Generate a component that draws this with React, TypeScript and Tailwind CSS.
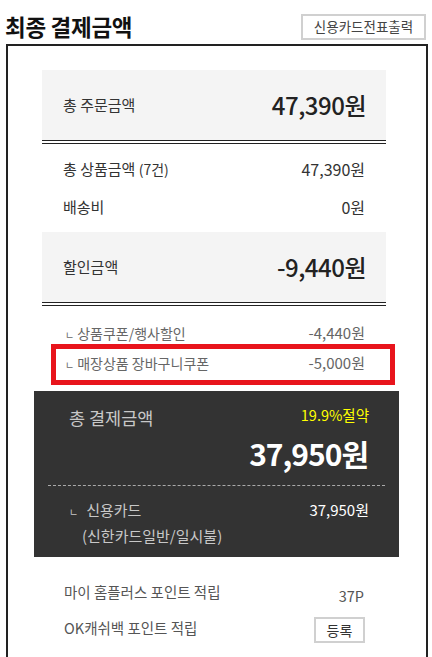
import React from "react";

const F = { fontFamily: '"Noto Sans CJK KR", "Noto Sans", sans-serif' };

function DoubleLine() {
  return <div className="h-[4px] border-y border-[#222]" />;
}

export default function App() {
  return (
    <div className="w-[432px] h-[657px] overflow-hidden bg-white text-[#333]" style={F}>
      <div className="flex items-center justify-between pl-[5px] pr-[6px] pt-[9px] h-[44px]">
        <h1 className="text-[22.5px] leading-none font-bold text-[#111] tracking-[-0.3px]">최종 결제금액</h1>
        <button className="w-[125px] h-[26px] border-2 border-[#d0d0d0] text-[13.5px] text-[#444] leading-none">
          신용카드전표출력
        </button>
      </div>
      <div className="ml-[6px] w-[422px] h-[700px] border-2 border-[#222] border-b-0 pt-[24px]">
        <div className="ml-[34px] w-[344px]">
          <div className="h-[70px] bg-[#f4f4f4] flex items-center justify-between pl-[21px] pr-[20px]">
            <span className="text-[15px]">총 주문금액</span>
            <span className="text-[24px] font-medium text-[#222] tracking-[-0.5px]">47,390원</span>
          </div>
          <DoubleLine />
          <div className="pt-[14px] pb-[14px] px-[21px] flex flex-col gap-[16px]">
            <div className="flex justify-between items-center h-[22px]">
              <span className="text-[15px]">총 상품금액 <span className="text-[14px]">(7건)</span></span>
              <span className="text-[16px]">47,390원</span>
            </div>
            <div className="flex justify-between items-center h-[22px]">
              <span className="text-[15px]">배송비</span>
              <span className="text-[16px]">0원</span>
            </div>
          </div>
          <div className="h-[70px] bg-[#f4f4f4] flex items-center justify-between pl-[21px] pr-[20px]">
            <span className="text-[15px]">할인금액</span>
            <span className="text-[24px] font-medium text-[#222] tracking-[-0.5px]">-9,440원</span>
          </div>
          <DoubleLine />
          <div className="pt-[16px] px-[21px] flex flex-col gap-[8px] text-[#666]">
            <div className="flex justify-between items-center h-[22px]">
              <span className="text-[14px]"><span className="text-[10px] ml-[2px] mr-[3px]">ㄴ</span>상품쿠폰/행사할인</span>
              <span className="text-[15px]">-4,440원</span>
            </div>
            <div className="relative flex justify-between items-center h-[22px]">
              <span className="text-[14px]"><span className="text-[10px] ml-[2px] mr-[3px]">ㄴ</span>매장상품 장바구니쿠폰</span>
              <span className="text-[15px]">-5,000원</span>
              <div className="absolute left-[-12px] right-[-30px] top-[-8px] h-[41px] border-[5px] border-[#e8141c]" />
            </div>
          </div>
        </div>
        <div className="ml-[26px] w-[365px] h-[166px] mt-[17px] bg-[#333] pt-[12px]">
          <div className="flex justify-between pl-[35px] pr-[30px]">
            <span className="text-[17.5px] text-[#c8c8c8] leading-[30px]">총 결제금액</span>
            <span className="text-[14.5px] text-[#ffff00] leading-[24px]">19.9%절약</span>
          </div>
          <div className="text-right pr-[31px] text-[30px] leading-[40px] font-bold text-white tracking-[-1px]">37,950원</div>
          <div className="mx-[14px] mt-[12px] border-t border-dashed border-[#aaa]" />
          <div className="flex justify-between pl-[35px] pr-[30px] pt-[12px]">
            <div className="text-[15px] text-[#c8c8c8] leading-[24px]">
              <div><span className="text-[10px] mr-[8px]">ㄴ</span>신용카드</div>
              <div className="pl-[13px]">(신한카드일반/일시불)</div>
            </div>
            <span className="text-[15px] text-white leading-[24px]">37,950원</span>
          </div>
        </div>
        <div className="ml-[56px] w-[301px] pt-[24px] flex flex-col gap-[10px] text-[14.5px] text-[#555]">
          <div className="flex justify-between items-end h-[26px]">
            <span className="self-start">마이 홈플러스 포인트 적립</span>
            <span className="pr-[1px]">37P</span>
          </div>
          <div className="flex justify-between items-center h-[26px]">
            <span className="self-start">OK캐쉬백 포인트 적립</span>
            <button className="w-[51px] h-[26px] border-2 border-[#d0d0d0] text-[14px] text-[#333]">등록</button>
          </div>
        </div>
      </div>
    </div>
  );
}
